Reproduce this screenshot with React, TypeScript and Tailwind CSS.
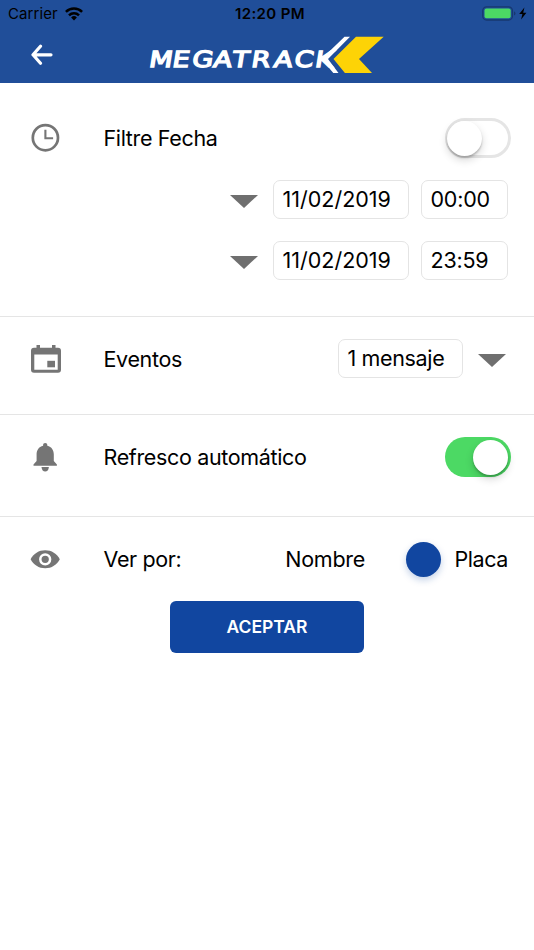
import { useState } from 'react'
import type { ReactNode } from 'react'

function StatusBar() {
  return (
    <div className="grid h-[27px] grid-cols-3 items-center pl-2 pr-[6px] text-black">
      <div className="flex items-center gap-[7px]">
        <span className="text-[15px] leading-[27px] tracking-[0.1px]">Carrier</span>
        <svg className="h-[14px] w-[18px]" viewBox="0 0 18 14" fill="none" stroke="currentColor" strokeWidth="2.5">
          <path d="M.9 4.9a11.5 11.5 0 0 1 16.2 0" />
          <path d="M4 8.3a7.1 7.1 0 0 1 10 0" />
          <path d="M9 13.4 6.1 10.5a4.1 4.1 0 0 1 5.8 0z" fill="currentColor" stroke="none" />
        </svg>
      </div>
      <span className="pl-1 text-center text-[15px] leading-[27px] font-semibold tracking-[0.35px] whitespace-nowrap">12:20 PM</span>
      <div className="flex items-center justify-end">
        <svg className="h-[15px] w-[46px]" viewBox="0 0 46 15">
          <rect x=".8" y=".8" width="29.6" height="13.2" rx="3.8" fill="none" stroke="#17386f" strokeWidth="1.3" />
          <rect x="2.5" y="2.5" width="26.2" height="9.8" rx="2" fill="#4cd964" />
          <path d="M32 5.2q1.5.8 1.5 2.2T32 9.6z" fill="#17386f" />
          <path d="M42.4 1.4 37.2 8h3.2l-1.3 5.6 5.3-6.9h-3.2z" fill="#000" />
        </svg>
      </div>
    </div>
  )
}

function Logo() {
  return (
    <svg className="h-[46px] w-[248px]" viewBox="143 32 248 46" role="img" aria-label="Megatrack">
      <text
        x="0 19 35.3 52.8 68.3 83.8 102.3 119.2 136.2"
        y="0"
        transform="translate(148.2 67.2) skewX(-9) scale(1.22 1)"
        fill="#fff"
        stroke="#fff"
        strokeWidth="1.4"
        fontSize="22.2"
        className="font-['DejaVu_Sans',sans-serif]"
      >
        MEGATRACK
      </text>
      <path d="M344.5 36.8h5.5l-22 22.2 10.5 14h-5.2l-11.8-14z" fill="#fff" />
      <path d="M356 36.8h27.7L359 58.9l13 14.1h-27.1L333.5 59z" fill="#fdd306" />
    </svg>
  )
}

const ClockIcon = () => (
  <svg className="h-[30px] w-[30px]" viewBox="0 0 30 30" fill="none" stroke="#757575">
    <circle cx="15.4" cy="14.7" r="12.6" strokeWidth="2.7" />
    <path d="M15.4 6.7v8.6h7.7" strokeWidth="2.1" />
  </svg>
)

const CalendarIcon = () => (
  <svg className="-mr-px ml-px h-[30px] w-[30px]" viewBox="0 0 30 30" fill="#757575">
    <path
      fillRule="evenodd"
      d="M5.5 1H9v2.8h12V1h3.5v2.8H27a3 3 0 0 1 3 3v19a3 3 0 0 1-3 3H3a3 3 0 0 1-3-3v-19a3 3 0 0 1 3-3h2.5zM3.3 10.5v15.3h23.4V10.5z"
    />
    <path d="M16.3 16.8H24v6.5h-7.7z" />
  </svg>
)

const BellIcon = () => (
  <svg className="h-[30px] w-[30px]" viewBox="0 0 30 30" fill="#757575">
    <path d="M15.2 1.1c1.3 0 2.1.8 2.1 2v.7c4.4 1 6.5 4.5 6.5 8.8v6.5l3.1 3.5v1.2H3.5v-1.2l3.1-3.5v-6.5c0-4.3 2.1-7.8 6.5-8.8v-.7c0-1.2.8-2 2.1-2z" />
    <path d="M11.5 25h7.4c-.3 3-1.7 4.6-3.7 4.6s-3.4-1.6-3.7-4.6z" />
  </svg>
)

const EyeIcon = () => (
  <svg className="h-[30px] w-[30px]" viewBox="-.2 0 30 30">
    <path d="M.4 15.3C3.2 9.7 8.7 6.3 15 6.3s11.8 3.4 14.6 9c-2.8 5.6-8.3 9-14.6 9S3.2 20.9.4 15.3z" fill="#757575" />
    <circle cx="15" cy="15.3" r="4.9" fill="#757575" stroke="#fff" strokeWidth="2.5" />
  </svg>
)

const Caret = () => (
  <svg className="mt-[3px] h-[13px] w-[28px] shrink-0" viewBox="0 0 28 13">
    <path d="M0 0h28L14 13z" fill="#6f6f6f" />
  </svg>
)

function Toggle({ on, onChange }: { on: boolean; onChange: () => void }) {
  return (
    <button
      role="switch"
      aria-checked={on}
      onClick={onChange}
      className={
        on
          ? 'flex h-10 w-[65.5px] items-center justify-end rounded-full bg-[#4cd964] pr-[2.5px]'
          : 'flex h-10 w-[65.5px] items-center rounded-full border-[3px] border-[#e5e5e5] bg-white'
      }
    >
      <span
        className={
          on
            ? 'h-[35px] w-[35px] rounded-full bg-white shadow-[0_4px_9px_rgba(0,0,0,0.16),0_2px_2px_rgba(0,0,0,0.2)]'
            : '-ml-px h-[35px] w-[35px] rounded-full bg-white shadow-[0_4px_9px_rgba(0,0,0,0.16),0_2px_2px_rgba(0,0,0,0.2)]'
        }
      />
    </button>
  )
}

function Box({ className, children }: { className: string; children: ReactNode }) {
  return (
    <div className={`h-[39px] rounded-[7px] border border-[#e4e4e4] pl-[8.5px] leading-[37px] whitespace-nowrap ${className}`}>
      {children}
    </div>
  )
}

function Row({ icon, label, children }: { icon: ReactNode; label: string; children: ReactNode }) {
  return (
    <div className="flex h-10 items-center pl-[30px]">
      {icon}
      <span className="ml-[43.5px] flex-1 tracking-[-0.35px] whitespace-nowrap">{label}</span>
      {children}
    </div>
  )
}

const ranges = [
  { date: '11/02/2019', time: '00:00' },
  { date: '11/02/2019', time: '23:59' },
]

export default function App() {
  const [filterDate, setFilterDate] = useState(false)
  const [autoRefresh, setAutoRefresh] = useState(true)

  return (
    <div className="min-h-[950px] w-[534px] bg-white font-[Inter,'Noto_Sans',sans-serif] text-[21.5px] text-black">
      <header className="h-[83px] bg-[#204e99]">
        <StatusBar />
        <div className="flex h-14 items-center pl-[31px]">
          <button aria-label="Volver">
            <svg className="h-[22px] w-[22px]" viewBox="0 0 22 22" fill="none" stroke="#fff" strokeWidth="3.2" strokeLinecap="round" strokeLinejoin="round">
              <path d="M20 10.8H2M9.5 2.3 2 10.8l7.5 8.5" />
            </svg>
          </button>
          <div className="ml-[90px]">
            <Logo />
          </div>
        </div>
      </header>

      <section className="h-[234px] border-b border-[#e5e5e5] pt-[35px] pr-[23.5px]">
        <Row icon={<ClockIcon />} label="Filtre Fecha">
          <Toggle on={filterDate} onChange={() => setFilterDate(!filterDate)} />
        </Row>
        <div className="mt-[22px] flex flex-col gap-[22px] pr-[2.5px]">
          {ranges.map((range) => (
            <div key={range.time} className="flex items-center justify-end">
              <Caret />
              <Box className="ml-[15px] w-[136px]">{range.date}</Box>
              <Box className="ml-3 w-[87px] tracking-[-0.2px]">{range.time}</Box>
            </div>
          ))}
        </div>
      </section>

      <section className="h-[98px] border-b border-[#e5e5e5] pt-[22px] pr-7">
        <Row icon={<CalendarIcon />} label="Eventos">
          <Box className="mr-[15px] mb-px w-[125px] tracking-[-0.35px]">1 mensaje</Box>
          <Caret />
        </Row>
      </section>

      <section className="h-[102px] border-b border-[#e5e5e5] pt-[22px] pr-[23.5px]">
        <Row icon={<BellIcon />} label="Refresco automático">
          <Toggle on={autoRefresh} onChange={() => setAutoRefresh(!autoRefresh)} />
        </Row>
      </section>

      <section className="pt-[22px] pr-[26px]">
        <Row icon={<EyeIcon />} label="Ver por:">
          <span className="tracking-[-0.3px]">Nombre</span>
          <span className="mr-[13px] ml-[41.5px] h-[35px] w-[35px] rounded-full bg-[#1146a0] shadow-[0_3px_7px_rgba(17,70,160,0.25)]" />
          <span className="tracking-[-0.4px]">Placa</span>
        </Row>
      </section>

      <button className="mx-auto mt-[22px] block h-[52px] w-[194px] rounded-[6px] bg-[#1146a0] text-[17.5px] font-semibold text-white">
        ACEPTAR
      </button>
    </div>
  )
}
